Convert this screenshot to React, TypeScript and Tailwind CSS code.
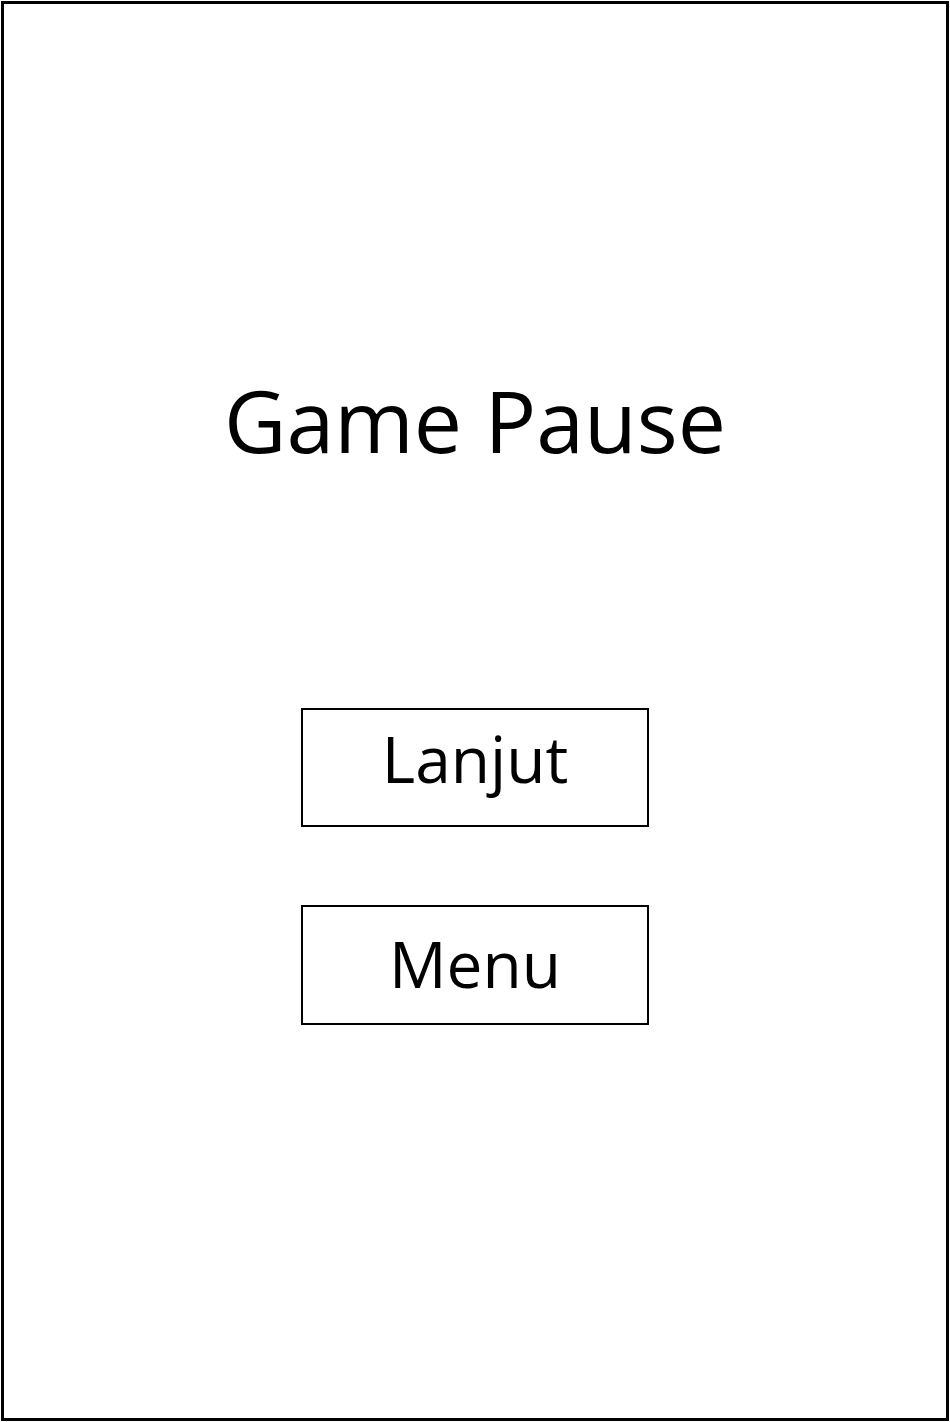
import React from 'react';

const PauseButton = ({ label, className }: { label: string; className: string }) => (
  <button className={`flex w-[348px] items-center justify-center border-2 border-black bg-white text-[64px] leading-none text-black ${className}`}>
    {label}
  </button>
);

export default function App() {
  return (
    <div className="h-[1422px] w-[950px] bg-white p-px" style={{ fontFamily: '"Open Sans", sans-serif' }}>
      <div className="flex h-[1420px] w-[948px] flex-col items-center border-[3px] border-black">
        <h1 className="mt-[373px] text-[86px] font-normal leading-none text-black">Game Pause</h1>
        <div className="mt-[245px] flex flex-col items-center gap-[78px]">
          <PauseButton label="Lanjut" className="h-[119px] pb-[18px]" />
          <PauseButton label="Menu" className="h-[120px] pb-[2px]" />
        </div>
      </div>
    </div>
  );
}
